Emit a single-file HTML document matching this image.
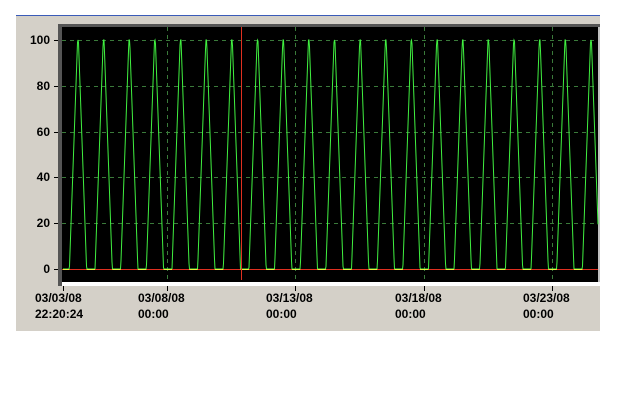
<!DOCTYPE html>
<html><head><meta charset="utf-8"><style>
body{margin:0;width:640px;height:400px;background:#fff;position:relative;overflow:hidden;font-family:"Liberation Sans",Arial,sans-serif}
#panel{position:absolute;left:16px;top:15px;width:584px;height:316px;background:#d4d0c8;border-top:1px solid #3a5bb8;box-sizing:border-box}
.yl{position:absolute;font-size:12px;font-weight:bold;color:#000;text-align:right;width:42px;left:8px}
.xl{position:absolute;font-size:12px;font-weight:bold;color:#000;line-height:16px;top:290px}
</style></head><body>
<div id="panel"></div>
<svg width="640" height="400" style="position:absolute;left:0;top:0">
<rect x="58" y="24" width="542" height="3" fill="#555"/>
<rect x="58" y="24" width="4" height="262" fill="#555"/>
<rect x="62" y="27" width="538" height="255" fill="#000"/>
<rect x="62" y="282" width="538" height="4" fill="#fff"/>
<rect x="598" y="27" width="2" height="255" fill="#c0c0c0"/>
<g stroke="#3a7a3a" stroke-dasharray="4,4" stroke-width="1">
<line x1="62" x2="598" y1="40.5" y2="40.5"/><line x1="62" x2="598" y1="86.5" y2="86.5"/>
<line x1="62" x2="598" y1="132.5" y2="132.5"/><line x1="62" x2="598" y1="177.5" y2="177.5"/>
<line x1="62" x2="598" y1="223.5" y2="223.5"/>
<line x1="167.5" x2="167.5" y1="27" y2="282"/><line x1="295.5" x2="295.5" y1="27" y2="282"/>
<line x1="424.5" x2="424.5" y1="27" y2="282"/><line x1="552.5" x2="552.5" y1="27" y2="282"/>
</g>
<g stroke="#000" stroke-width="1">
<line x1="54" x2="58" y1="40.5" y2="40.5"/><line x1="54" x2="58" y1="86.5" y2="86.5"/>
<line x1="54" x2="58" y1="132.5" y2="132.5"/><line x1="54" x2="58" y1="177.5" y2="177.5"/>
<line x1="54" x2="58" y1="223.5" y2="223.5"/><line x1="54" x2="58" y1="269.5" y2="269.5"/>
<line x1="63.5" x2="63.5" y1="286" y2="291"/><line x1="167.5" x2="167.5" y1="286" y2="291"/>
<line x1="295.5" x2="295.5" y1="286" y2="291"/><line x1="424.5" x2="424.5" y1="286" y2="291"/>
<line x1="552.5" x2="552.5" y1="286" y2="291"/>
</g>
<polyline id="w" fill="none" stroke="#40f040" stroke-width="1"/>
<line x1="62" x2="598" y1="269.5" y2="269.5" stroke="#e03020"/>
<g id="yel" stroke="#f0f040" stroke-width="1"></g>
<line x1="241.5" x2="241.5" y1="27" y2="280" stroke="#e03020"/>
</svg>
<div class="yl" style="top:33px">100</div>
<div class="yl" style="top:79px">80</div>
<div class="yl" style="top:125px">60</div>
<div class="yl" style="top:170px">40</div>
<div class="yl" style="top:216px">20</div>
<div class="yl" style="top:262px">0</div>
<div class="xl" style="left:35px">03/03/08<br>22:20:24</div>
<div class="xl" style="left:138px">03/08/08<br>00:00</div>
<div class="xl" style="left:266px">03/13/08<br>00:00</div>
<div class="xl" style="left:395px">03/18/08<br>00:00</div>
<div class="xl" style="left:523px">03/23/08<br>00:00</div>
<script>
var p=[],T=25.65,H=8.6,y="";
for(var x=63;x<=598;x+=0.5){var d=((x-78)%T+T)%T;if(d>T/2)d=T-d;var f=Math.max(0,1-d/H);f=Math.min(1,f*1.05);p.push(x+","+(269-229*f).toFixed(1));}
document.getElementById('w').setAttribute('points',p.join(' '));
for(var k=-1;k<22;k++){var c=78+k*T+T/2;var x1=Math.max(63,c-T/2+H),x2=Math.min(598,c+T/2-H);if(x2>x1)y+='<line x1="'+x1+'" x2="'+x2+'" y1="269.5" y2="269.5"/>';}
document.getElementById('yel').innerHTML=y;
</script>
</body></html>
